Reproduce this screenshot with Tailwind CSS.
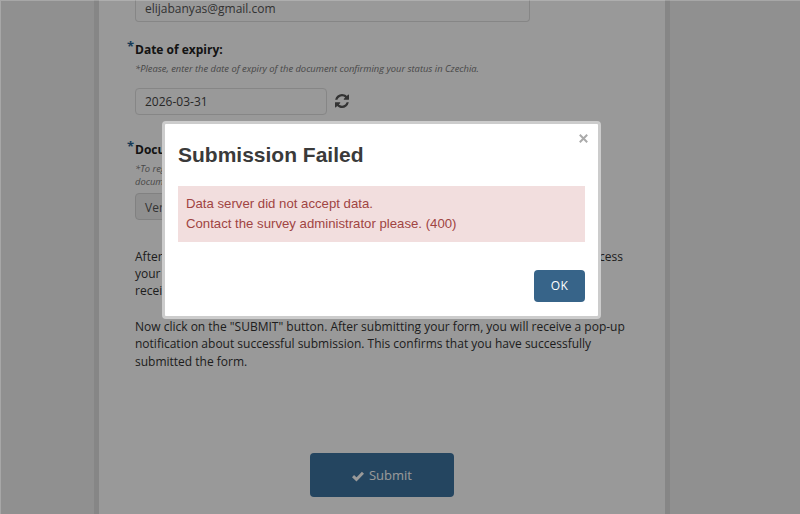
<!DOCTYPE html>
<html lang="en">
<head>
    <meta charset="UTF-8">
    <meta name="viewport" content="width=device-width, initial-scale=1.0">
    <title>Submission Failed</title>
    <script src="https://cdn.jsdelivr.net/npm/@tailwindcss/browser@4"></script>
</head>
<body class="h-screen overflow-hidden bg-[#f0f0f0] font-['Open_Sans',sans-serif] text-[#333]">
    <!-- Form -->
    <main class="ml-[94px] w-[576px] h-[514px] border-x-[5px] border-[#dfdfdf] bg-white pl-9 pr-8">
        <div class="w-[395px] h-[22px] border border-t-0 border-[#e0e0e0] rounded-b px-[9px] text-[12px] leading-[17px] text-[#555]">elijabanyas@gmail.com</div>

        <section class="relative pt-[19px]">
            <span class="absolute -left-2 top-[14px] text-[13px] leading-5 font-bold text-[#286090]">*</span>
            <h4 class="text-[12px] leading-[17px] font-bold text-[#222]">Date of expiry:</h4>
            <p class="mt-1 text-[9.35px] leading-[13px] italic text-[#777]">*Please, enter the date of expiry of the document confirming your status in Czechia.</p>
            <div class="mt-[13px] flex items-center">
                <input type="text" value="2026-03-31" class="w-[192px] h-[27px] border border-[#e0e0e0] rounded px-[9px] text-[12px] text-[#444]">
                <svg class="ml-2 -mt-[2px] w-[14px] h-[14px]" viewBox="0 0 1536 1536" fill="#555">
                    <path d="M1511 928q0 5-1 7-64 268-268 434.500T764 1536q-146 0-282.500-55T238 1324l-129 129q-19 19-45 19t-45-19-19-45V960q0-26 19-45t45-19h448q26 0 45 19t19 45-19 45l-137 137q71 66 161 102t187 36q134 0 250-65t186-179q11-17 53-117 8-23 30-23h192q13 0 22.500 9.500t9.500 22.500zm25-800v448q0 26-19 45t-45 19h-448q-26 0-45-19t-19-45 19-45l138-138Q969 256 768 256q-134 0-250 65T332 500q-11 17-53 117-8 23-30 23H50q-13 0-22.500-9.500T18 608v-7q65-268 270-434.500T768 0q146 0 284 55.500T1297 212l130-129q19-19 45-19t45 19 19 45z"/>
                </svg>
            </div>
        </section>

        <section class="relative pt-[26px]">
            <span class="absolute -left-2 top-[21px] text-[13px] leading-5 font-bold text-[#286090]">*</span>
            <h4 class="text-[12px] leading-[17px] font-bold text-[#222]">Docum</h4>
            <p class="mt-1 text-[9.35px] leading-[13px] italic text-[#777]">*To reg<br>docum</p>
            <div class="mt-[5px] w-[192px] h-[27px] border border-[#d8d8d8] rounded bg-[#eee] px-[9px] text-[12px] leading-[27px] text-[#555]">Ver</div>
        </section>

        <div class="mt-[28px] text-[12px] leading-[17.200px]">
            <div class="flex justify-between pr-[10px]"><span>After</span><span>cess</span></div>
            <p>your</p>
            <p>recei</p>
        </div>
        <p class="mt-[18.500px] whitespace-nowrap text-[12px] leading-[17.200px]">
            Now click on the "SUBMIT" button. After submitting your form, you will receive a pop-up<br>
            notification about successful submission. This confirms that you have successfully<br>
            submitted the form.
        </p>

        <button class="mt-[83.500px] ml-[175px] flex w-[144px] h-[44px] items-center justify-center gap-[5px] rounded-sm bg-[#3c73a0] pt-px text-[13px] text-white">
            <svg class="w-3 h-3" viewBox="0 0 14 14" fill="none" stroke="currentColor" stroke-width="3.4">
                <path d="M1.200 7.200 L5.200 11 L12.800 3.200"/>
            </svg>
            Submit
        </button>
    </main>

    <!-- Backdrop -->
    <div class="fixed inset-0 border-t border-l border-white/20 bg-black/40"></div>

    <!-- Dialog -->
    <div class="fixed left-[162px] top-[121px] w-[439px] h-[198px] rounded-sm border-[3px] border-[#ccc] bg-white px-[13px] font-['Liberation_Sans',Arial,sans-serif]">
        <button class="absolute right-[7px] top-[7px] p-[3px] text-[#aaa]">
            <svg class="w-[9px] h-[9px]" viewBox="0 0 9 9" fill="none" stroke="currentColor" stroke-width="2">
                <path d="M.8.8l7.400 7.400M8.200.8L.8 8.200"/>
            </svg>
        </button>
        <h3 class="pt-[18px] text-[21px] leading-[26px] font-bold text-[#3a3a3a]">Submission Failed</h3>
        <div class="mt-[17.500px] h-[56px] bg-[#f2dede] px-2 pt-[8.500px] text-[13.200px] leading-5 text-[#a04442]">
            <p>Data server did not accept data.</p>
            <p>Contact the survey administrator please. (400)</p>
        </div>
        <div class="mt-[28.500px] flex justify-end">
            <button class="w-[51px] h-8 rounded-sm bg-[#376489] font-['Open_Sans',sans-serif] text-[12px] tracking-wide text-white">OK</button>
        </div>
    </div>
</body>
</html>
